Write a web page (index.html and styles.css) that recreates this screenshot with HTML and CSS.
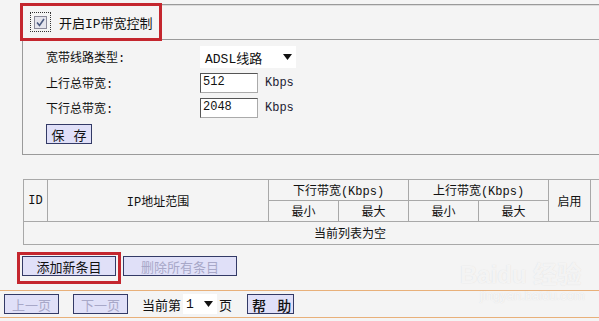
FILE: index.html
```html
<!DOCTYPE html>
<html lang="zh-CN">
<head>
  <meta charset="UTF-8">
  <title>IP带宽控制</title>
  <link rel="stylesheet" href="styles.css">
</head>
<body>
  <div class="page">
    <div class="ctl">
      <div class="ctl-head">
        <span class="focus"><span class="check"><svg width="11" height="11" viewBox="0 0 11 11"><path d="M2 5.5 L4.5 8.5 L9 2" fill="none" stroke="#4a5a80" stroke-width="1.6"/></svg></span></span>
        <span class="title">开启IP带宽控制</span>
      </div>
      <div class="form">
        <div class="row">
          <span class="label">宽带线路类型:</span>
          <div class="select"><span>ADSL线路</span><svg class="arrow" width="9" height="6" viewBox="0 0 9 6"><path d="M0 0 H9 L4.5 6 Z" fill="#111"/></svg></div>
        </div>
        <div class="row">
          <span class="label">上行总带宽:</span>
          <div class="input">512</div>
          <span class="unit">Kbps</span>
        </div>
        <div class="row">
          <span class="label">下行总带宽:</span>
          <div class="input">2048</div>
          <span class="unit">Kbps</span>
        </div>
        <button class="btn save">保&nbsp;存</button>
      </div>
    </div>

    <div class="grid">
      <table class="rules">
        <tr>
          <th rowspan="2" class="c-id">ID</th>
          <th rowspan="2" class="c-ip">IP地址范围</th>
          <th colspan="2">下行带宽(Kbps)</th>
          <th colspan="2">上行带宽(Kbps)</th>
          <th rowspan="2" class="c-on">启用</th>
          <th rowspan="2" class="c-op"></th>
        </tr>
        <tr>
          <th class="c-bw">最小</th>
          <th class="c-bw">最大</th>
          <th class="c-bw">最小</th>
          <th class="c-bw">最大</th>
        </tr>
        <tr>
          <td colspan="8" class="empty">当前列表为空</td>
        </tr>
      </table>
    </div>

    <div class="actions">
      <button class="btn wide">添加新条目</button>
      <button class="btn wide off">删除所有条目</button>
    </div>
  </div>

  <div class="pager">
    <button class="btn pg off">上一页</button>
    <button class="btn pg off">下一页</button>
    <span class="cur">当前第</span>
    <div class="pgsel"><span>1</span><svg width="9" height="6" viewBox="0 0 9 6"><path d="M0 0 H9 L4.5 6 Z" fill="#111"/></svg></div>
    <span class="cur">页</span>
    <button class="btn help">帮&nbsp;助</button>
  </div>

  <div class="mark mark-top"></div>
  <div class="mark mark-add"></div>
  <div class="wm">Bai<span class="paw">du</span> 经验<div class="wm-url">jingyan.baidu.com</div></div>
</body>
</html>
```

FILE: styles.css
```css
body {
  margin: 0;
  width: 599px;
  height: 321px;
  overflow: hidden;
  position: relative;
  background-color: #f4f4f4;
  color: #111;
  font-family: "Liberation Mono", "Noto Sans CJK SC", monospace;
  font-size: 12px;
}

.page {
  padding-left: 22px;
}

.ctl {
  margin-top: 4px;
  border-top: 1px solid #9a9a9a;
  box-shadow: inset 0 1px #dcdcdc;
}

.ctl-head {
  height: 34px;
  display: flex;
  align-items: center;
  border-bottom: 1px solid #9a9a9a;
}

.focus {
  margin-left: 8px;
  width: 19px;
  height: 18px;
  border: 1px dotted #333;
  display: flex;
  align-items: center;
  justify-content: center;
}

.check {
  width: 11px;
  height: 11px;
  border: 1px solid #8a8a9a;
  background-color: #e4e4ec;
  display: flex;
}

.title {
  margin-left: 8px;
  font-size: 13px;
}

.form {
  height: 115px;
  border-left: 1px solid #9a9a9a;
  border-bottom: 1px solid #9a9a9a;
  padding: 6px 0 0 23px;
  box-sizing: border-box;
}

.row {
  display: flex;
  align-items: center;
  margin-bottom: 5px;
}

.label {
  width: 154px;
}

.select {
  width: 96px;
  height: 22px;
  background-color: #fff;
  display: flex;
  align-items: center;
  justify-content: space-between;
  padding: 0 4px 0 5px;
  box-sizing: border-box;
  font-size: 13px;
}

.input {
  width: 58px;
  height: 20px;
  background-color: #fff;
  border: 1px solid #555;
  border-right-color: #aaa;
  border-bottom-color: #aaa;
  box-sizing: border-box;
  padding: 1px 2px;
}

.unit {
  margin-left: 7px;
  color: #223;
}

.btn {
  font-family: "Noto Sans CJK SC", sans-serif;
  font-size: 12px;
  height: 20px;
  padding: 0;
  background-color: #e0e0f8;
  border: 1px solid #333a66;
  color: #111;
}

.save {
  width: 46px;
  margin-top: 1px;
  font-size: 13px;
  letter-spacing: 3px;
  text-indent: 3px;
}

.grid {
  overflow: hidden;
}

.rules {
  margin-top: 24px;
  margin-left: 1px;
  width: 620px;
  border-collapse: collapse;
}

.rules th,
.rules td {
  border: 1px solid #a8a8a8;
  font-weight: normal;
  text-align: center;
  height: 20px;
  padding: 0;
}

.c-id { width: 23px; }
.c-ip { width: 220px; }
.c-bw { width: 69px; }
.c-on { width: 41px; }

.rules .empty {
  height: 22px;
  text-align: left;
  padding-left: 290px;
}

.actions {
  display: flex;
  gap: 7px;
  margin-top: 11px;
}

.wide {
  width: 94px;
  font-size: 13px;
}

.wide.off {
  width: 114px;
}

.off {
  color: #a8a8c8;
}

.pager {
  margin-top: 14px;
  height: 26px;
  border-top: 1px solid #e8b07a;
  border-bottom: 1px solid #e8b07a;
  display: flex;
  align-items: center;
  padding-left: 4px;
  font-family: "Noto Sans CJK SC", sans-serif;
}

.pg {
  width: 55px;
  margin-right: 14px;
  font-size: 13px;
}

.cur {
  font-size: 13px;
}

.pgsel {
  width: 34px;
  height: 20px;
  background-color: #fff;
  display: flex;
  align-items: center;
  justify-content: space-between;
  padding: 0 4px 0 3px;
  box-sizing: border-box;
  margin: 0 2px;
  font-family: "Liberation Mono", monospace;
  font-size: 13px;
}

.help {
  width: 47px;
  margin-left: 15px;
  font-size: 14px;
  font-weight: 500;
  letter-spacing: 4px;
  text-indent: 4px;
}

.mark {
  position: absolute;
  border: 3px solid #c4262e;
  box-sizing: border-box;
}

.mark-top {
  left: 20px;
  top: 3px;
  width: 142px;
  height: 38px;
}

.mark-add {
  left: 17px;
  top: 252px;
  width: 104px;
  height: 32px;
}

.wm {
  position: absolute;
  left: 460px;
  top: 262px;
  color: rgba(255, 255, 255, 0.7);
  text-shadow: 0 0 1px rgba(170, 170, 170, 0.35);
  font-family: "Liberation Sans", "Noto Sans CJK SC", sans-serif;
  font-size: 24px;
  font-weight: bold;
  line-height: 26px;
}

.wm-url {
  font-size: 13px;
  font-weight: normal;
  line-height: 16px;
  margin-left: 20px;
}
```
